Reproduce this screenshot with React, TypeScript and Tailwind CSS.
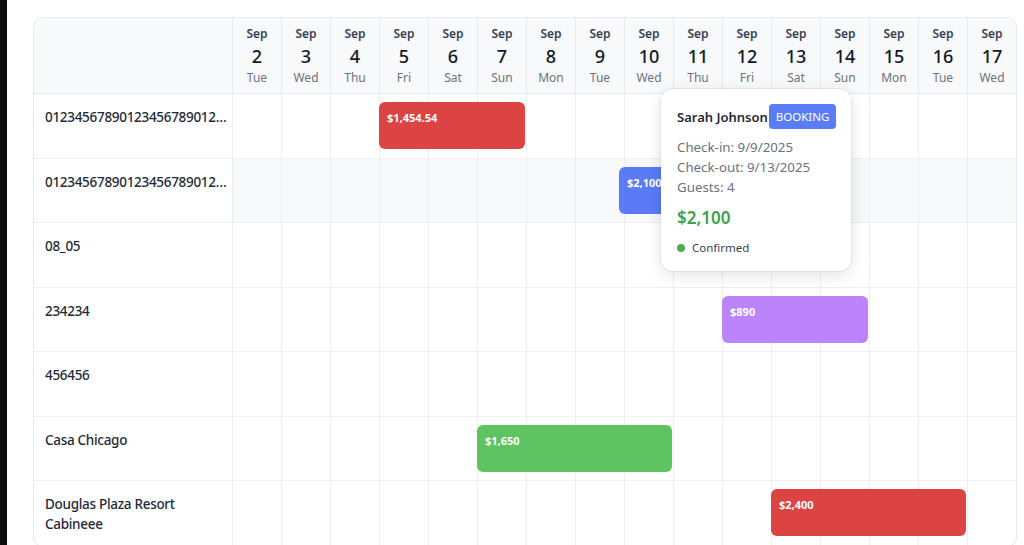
import React from "react";

const days = [
  { d: 2, w: "Tue" },
  { d: 3, w: "Wed" },
  { d: 4, w: "Thu" },
  { d: 5, w: "Fri" },
  { d: 6, w: "Sat" },
  { d: 7, w: "Sun" },
  { d: 8, w: "Mon" },
  { d: 9, w: "Tue" },
  { d: 10, w: "Wed" },
  { d: 11, w: "Thu" },
  { d: 12, w: "Fri" },
  { d: 13, w: "Sat" },
  { d: 14, w: "Sun" },
  { d: 15, w: "Mon" },
  { d: 16, w: "Tue" },
  { d: 17, w: "Wed" },
];

interface Bar {
  left: number;
  width: number;
  label: string;
  color: string;
}

interface Row {
  name: string;
  truncate?: boolean;
  hover?: boolean;
  bars: Bar[];
}

// left/width in px relative to the row (label column is 198px, days are 49px)
const rows: Row[] = [
  {
    name: "0123456789012345678901234567890",
    truncate: true,
    bars: [{ left: 345, width: 146, label: "$1,454.54", color: "bg-[#dc4343]" }],
  },
  {
    name: "0123456789012345678901245678901",
    truncate: true,
    hover: true,
    bars: [{ left: 585, width: 195, label: "$2,100", color: "bg-[#5a7bf6]" }],
  },
  { name: "08_05", bars: [] },
  {
    name: "234234",
    bars: [{ left: 688, width: 146, label: "$890", color: "bg-[#bb84fb]" }],
  },
  { name: "456456", bars: [] },
  {
    name: "Casa Chicago",
    bars: [{ left: 443, width: 195, label: "$1,650", color: "bg-[#5ec462]" }],
  },
  {
    name: "Douglas Plaza Resort Cabineee",
    bars: [{ left: 737, width: 195, label: "$2,400", color: "bg-[#dc4343]" }],
  },
];

function Tooltip() {
  return (
    <div className="absolute left-[654px] top-[89px] z-20 w-[190px] rounded-xl bg-white px-4 pt-[15px] pb-[15px] shadow-[0_4px_16px_rgba(0,0,0,0.12)] ring-1 ring-black/5">
      <div className="flex items-center">
        <span className="whitespace-nowrap text-[13px] leading-5 font-semibold text-[#1f2937]">Sarah Johnson</span>
        <span className="ml-px rounded bg-[#5b7cf7] px-[7px] text-[11.5px] leading-[25px] text-white">BOOKING</span>
      </div>
      <div className="mt-[8px] text-[13.3px] leading-5 text-[#6b7280]">
        <div>Check-in: 9/9/2025</div>
        <div>Check-out: 9/13/2025</div>
        <div>Guests: 4</div>
      </div>
      <div className="mt-[7px] text-[17px] leading-7 font-semibold text-[#43a047]">$2,100</div>
      <div className="mt-[8px] flex items-center gap-[7px] text-[11.5px] leading-4 text-[#374151]">
        <span className="h-2 w-2 rounded-full bg-[#4caf50]" />
        Confirmed
      </div>
    </div>
  );
}

export default function App() {
  return (
    <div
      className="flex h-[545px] w-[1024px] overflow-hidden bg-white"
      style={{ fontFamily: '"Noto Sans", "Open Sans", sans-serif' }}
    >
      <div className="w-[7px] shrink-0 bg-[#0d0d0d]" />
      <div className="relative pl-[26px] pt-[17px]">
        <div className="w-[984px] overflow-hidden rounded-[10px] border border-[#e6e8eb]">
          {/* header */}
          <div className="grid grid-cols-[198px_repeat(16,49px)] border-b border-[#e6e8eb] bg-[#f7f9fa]">
            <div className="h-[75px]" />
            {days.map((day) => (
              <div key={day.d} className="flex flex-col items-center border-l border-[#e6e8eb] pt-[8px]">
                <span className="text-xs leading-4 font-semibold text-[#374151]">Sep</span>
                <span className="text-lg leading-7 font-medium text-[#111827]">{day.d}</span>
                <span className="text-xs leading-4 text-[#6b7280]">{day.w}</span>
              </div>
            ))}
          </div>

          {/* rows */}
          {rows.map((row) => (
            <div key={row.name} className="relative grid h-[64.5px] grid-cols-[198px_repeat(16,49px)] border-b border-[#eceef0]">
              <div className="min-w-0 pl-[11px] pt-[13px]">
                <div
                  className={`text-[13.5px] leading-5 font-medium tracking-[-0.3px] text-[#1f2937] ${row.truncate ? "truncate" : ""}`}
                >
                  {row.name}
                </div>
              </div>
              {days.map((day) => (
                <div
                  key={day.d}
                  className={`border-l border-[#eceef0] ${row.hover ? "bg-[#f6f8f9]" : ""}`}
                />
              ))}
              {row.bars.map((bar) => (
                <div
                  key={bar.label}
                  className={`absolute top-[8px] h-[47px] rounded-md px-2 pt-[8px] text-[11px] leading-4 font-bold text-white ${bar.color}`}
                  style={{ left: bar.left, width: bar.width }}
                >
                  {bar.label}
                </div>
              ))}
            </div>
          ))}
        </div>
        <Tooltip />
      </div>
    </div>
  );
}
